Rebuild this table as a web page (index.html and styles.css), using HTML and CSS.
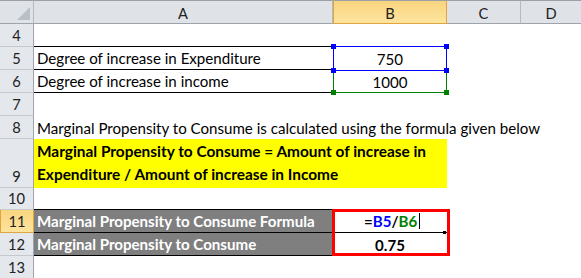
FILE: index.html
```html
<!DOCTYPE html>
<html>
<head>
<meta charset="utf-8">
<link rel="stylesheet" href="styles.css">
</head>
<body>
<div class="sheet">
  <div class="corner"><span class="tri"></span></div>
  <div class="colh">A</div>
  <div class="colh sel">B</div>
  <div class="colh">C</div>
  <div class="colh last">D</div>

  <div class="rowh">4</div>
  <div class="cell bb"></div><div class="cell"></div><div class="cell"></div><div class="cell"></div>

  <div class="rowh">5</div>
  <div class="cell bb">Degree of increase in Expenditure</div>
  <div class="cell num ref-blue">750<span class="h tl"></span><span class="h tr"></span><span class="h bl"></span><span class="h br"></span></div>
  <div class="cell"></div><div class="cell"></div>

  <div class="rowh">6</div>
  <div class="cell bb">Degree of increase in income</div>
  <div class="cell num ref-green">1000<span class="h bl g"></span><span class="h br g"></span></div>
  <div class="cell"></div><div class="cell"></div>

  <div class="rowh">7</div>
  <div class="cell"></div><div class="cell"></div><div class="cell"></div><div class="cell"></div>

  <div class="rowh">8</div>
  <div class="cell overflow">Marginal Propensity to Consume is calculated using the formula given below</div>

  <div class="rowh">9</div>
  <div class="cell formula-note">Marginal Propensity to Consume = Amount of increase in Expenditure / Amount of increase in Income</div>
  <div class="cell"></div><div class="cell"></div>

  <div class="rowh">10</div>
  <div class="cell bb"></div><div class="cell"></div><div class="cell"></div><div class="cell"></div>

  <div class="rowh selrow">11</div>
  <div class="cell dark bb">Marginal Propensity to Consume Formula</div>
  <div class="cell num bold bb edit"><span class="eq">=</span><span class="blue">B5</span><span>/</span><span class="green">B6</span><span class="caret"></span><span class="redbox"></span><span class="fill"></span></div>
  <div class="cell"></div><div class="cell"></div>

  <div class="rowh">12</div>
  <div class="cell dark bb">Marginal Propensity to Consume</div>
  <div class="cell num bold">0.75</div>
  <div class="cell"></div><div class="cell"></div>

  <div class="rowh">13</div>
  <div class="cell"></div><div class="cell"></div><div class="cell"></div><div class="cell"></div>
</div>
</body>
</html>
```

FILE: styles.css
```css
html, body {
  margin: 0;
  padding: 0;
  background: #ffffff;
}
body {
  font-family: Lato, "Liberation Sans", sans-serif;
  font-size: 15.1px;
  color: #000;
}
.sheet {
  display: grid;
  grid-template-columns: 34px 299px 114px 74px 60px;
  grid-template-rows: 24px 23px 23px 23px 23px 23px 49px 22px 23px 23px 23px;
  width: 581px;
  height: 278px;
  overflow: hidden;
}
.corner {
  box-sizing: border-box;
  background: #dfe3e8;
  border-top: 1px solid #9ba0a6;
  border-right: 1px solid #b4bac1;
  border-bottom: 1px solid #9ea4ab;
  display: flex;
  justify-content: flex-end;
  align-items: flex-end;
  padding: 0 3px 3px 0;
}
.tri {
  width: 0;
  height: 0;
  border-left: 13px solid transparent;
  border-bottom: 13px solid #b9bfc6;
}
.colh {
  box-sizing: border-box;
  background: #dfe3e8;
  border-top: 1px solid #9ba0a6;
  border-right: 1px solid #b4bac1;
  border-bottom: 1px solid #9ea4ab;
  display: flex;
  align-items: center;
  justify-content: center;
  color: #222;
  font-size: 14.7px;
  padding-top: 1px;
}
.colh.last { border-right: none; }
.colh.sel {
  background: linear-gradient(#f9d57f, #fde49e);
  border: 1px solid #e2a43c;
  border-top-color: #9ba0a6;
}
.rowh {
  box-sizing: border-box;
  background: #e4e7ec;
  border-right: 1px solid #9ea4ab;
  border-bottom: 1px solid #c4c9cf;
  display: flex;
  align-items: flex-end;
  justify-content: center;
  color: #222;
  font-size: 14.7px;
  padding-bottom: 1px;
  line-height: 20px;
}
.rowh.selrow {
  background: linear-gradient(#f9d57f, #fde49e);
  border: 1px solid #e2a43c;
  border-top: none;
}
.cell {
  box-sizing: border-box;
  position: relative;
  display: flex;
  align-items: flex-end;
  padding: 0 3px 1px 3px;
  line-height: 20px;
  white-space: nowrap;
}
.bb { border-bottom: 1px solid #000; }
.num { justify-content: center; }
.bold { font-weight: 700; }
.overflow {
  grid-column: 2 / span 4;
}
.formula-note {
  grid-column: 2 / span 2;
  background: #ffff00;
  font-weight: 700;
  font-size: 15.4px;
  white-space: normal;
  line-height: 23px;
  padding-bottom: 2px;
  padding-right: 4px;
}
.dark {
  background: #7f7f7f;
  color: #ffffff;
  font-weight: 700;
  overflow: hidden;
}
.ref-blue::before {
  content: "";
  position: absolute;
  left: 0; right: 0; top: -1px; bottom: -1px;
  border: 1px solid #0000ff;
  pointer-events: none;
}
.ref-green::before {
  content: "";
  position: absolute;
  left: 0; right: 0; top: 0; bottom: 0;
  border: 1px solid #008000;
  border-top: none;
}
.h {
  position: absolute;
  width: 5px;
  height: 5px;
  background: #0000ff;
  z-index: 2;
}
.h.g { background: #008000; }
.tl { left: -2px; top: -3px; }
.tr { right: -2px; top: -3px; }
.bl { left: -2px; bottom: -3px; }
.br { right: -2px; bottom: -3px; }
.ref-green .bl, .ref-green .br { bottom: -2px; }
.edit { justify-content: flex-start; padding-left: 31px; }
.blue { color: #0000ff; }
.green { color: #008000; }
.caret {
  display: inline-block;
  width: 1px;
  height: 16px;
  background: #000;
  margin-left: 2px;
  margin-bottom: 2px;
}
.redbox {
  position: absolute;
  left: -1px;
  top: -1px;
  width: 118px;
  height: 47px;
  box-sizing: border-box;
  border: 3px solid #ff0000;
  z-index: 3;
}
.fill {
  position: absolute;
  right: 1px;
  bottom: -2px;
  width: 3px;
  height: 3px;
  background: #000;
}
```
